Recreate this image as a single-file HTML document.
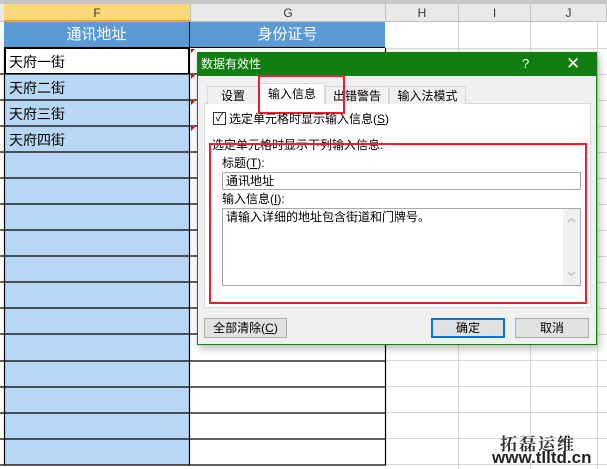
<!DOCTYPE html><html><head><meta charset="utf-8"><style>
*{margin:0;padding:0;box-sizing:border-box}
body{width:607px;height:469px;overflow:hidden;background:#fff;position:relative;font-family:"Liberation Sans","Noto Sans CJK SC",sans-serif;font-size:12px;color:#000}
.a{position:absolute}
</style></head><body>
<div class="a" style="left:0;top:0;width:607px;height:4px;background:#c6c6c6"></div>
<div class="a" style="left:0;top:4px;width:607px;height:18px;background:#e9e9e9;border-bottom:1px solid #c0c0c0"></div>
<div class="a" style="left:4px;top:4px;width:186px;height:18px;background:#f9d87a;border-bottom:2px solid #e3a93a;text-align:center;line-height:18px;color:#333">F</div>
<div class="a" style="left:190px;top:4px;width:195px;height:18px;border-left:1px solid #c0c0c0;text-align:center;line-height:18px;color:#333">G</div>
<div class="a" style="left:385px;top:4px;width:73px;height:18px;border-left:1px solid #c0c0c0;text-align:center;line-height:18px;color:#333">H</div>
<div class="a" style="left:458px;top:4px;width:72px;height:18px;border-left:1px solid #c0c0c0;text-align:center;line-height:18px;color:#333">I</div>
<div class="a" style="left:530px;top:4px;width:77px;height:18px;border-left:1px solid #c0c0c0;border-right:1px solid #c0c0c0;text-align:center;line-height:18px;color:#333">J</div>
<svg class="a" style="left:0;top:22px" width="607" height="447">
<g stroke="#d9d9d9"><line x1="458.5" y1="0" x2="458.5" y2="447"/><line x1="530.5" y1="0" x2="530.5" y2="447"/><line x1="597.5" y1="0" x2="597.5" y2="447"/>
<line x1="385" y1="26.5" x2="607" y2="26.5"/><line x1="385" y1="52.5" x2="607" y2="52.5"/><line x1="385" y1="78.5" x2="607" y2="78.5"/><line x1="385" y1="104.5" x2="607" y2="104.5"/><line x1="385" y1="130.5" x2="607" y2="130.5"/><line x1="385" y1="156.5" x2="607" y2="156.5"/><line x1="385" y1="182.5" x2="607" y2="182.5"/><line x1="385" y1="208.5" x2="607" y2="208.5"/><line x1="385" y1="234.5" x2="607" y2="234.5"/><line x1="385" y1="260.5" x2="607" y2="260.5"/><line x1="385" y1="286.5" x2="607" y2="286.5"/><line x1="385" y1="312.5" x2="607" y2="312.5"/><line x1="385" y1="338.5" x2="607" y2="338.5"/><line x1="385" y1="364.5" x2="607" y2="364.5"/><line x1="385" y1="390.5" x2="607" y2="390.5"/><line x1="385" y1="416.5" x2="607" y2="416.5"/><line x1="385" y1="442.5" x2="607" y2="442.5"/>
</g></svg>
<div class="a" style="left:4px;top:22px;width:186px;height:26px;background:#5b9bd5;color:#fff;font-size:15px;text-align:center;line-height:26px;border-right:1px solid #000;border-bottom:1px solid #000">通讯地址</div>
<div class="a" style="left:190px;top:22px;width:195px;height:26px;background:#5b9bd5;color:#fff;font-size:15px;text-align:center;line-height:26px;border-bottom:1px solid #000">身份证号</div>
<div class="a" style="left:4px;top:48px;width:186px;height:417px;background:#b7d7f5"></div>
<div class="a" style="left:5px;top:48px;width:184px;height:26px;background:#fff;border:1px solid #000"></div>
<svg class="a" style="left:0;top:48px" width="607" height="421">
<g stroke="#000" stroke-width="1.2">
<line x1="4.5" y1="0" x2="4.5" y2="417"/><line x1="189.5" y1="0" x2="189.5" y2="417"/><line x1="385.5" y1="0" x2="385.5" y2="417"/>
<line x1="0" y1="26" x2="386" y2="26"/><line x1="0" y1="52" x2="386" y2="52"/><line x1="0" y1="78" x2="386" y2="78"/><line x1="0" y1="104" x2="386" y2="104"/><line x1="0" y1="130" x2="386" y2="130"/><line x1="0" y1="156" x2="386" y2="156"/><line x1="0" y1="182" x2="386" y2="182"/><line x1="0" y1="208" x2="386" y2="208"/><line x1="0" y1="234" x2="386" y2="234"/><line x1="0" y1="260" x2="386" y2="260"/><line x1="0" y1="286" x2="386" y2="286"/><line x1="0" y1="313" x2="386" y2="313"/><line x1="0" y1="339" x2="386" y2="339"/><line x1="0" y1="365" x2="386" y2="365"/><line x1="0" y1="391" x2="386" y2="391"/><line x1="0" y1="417" x2="386" y2="417"/>
</g>
<g fill="#e00"><polygon points="191,1 195,1 191,5"/><polygon points="191,27 195,27 191,31"/><polygon points="191,53 195,53 191,57"/><polygon points="191,79 195,79 191,83"/></g>
</svg>
<div class="a" style="left:9px;top:52px;font-size:14px;line-height:20px">天府一街</div>
<div class="a" style="left:9px;top:78px;font-size:14px;line-height:20px">天府二街</div>
<div class="a" style="left:9px;top:104px;font-size:14px;line-height:20px">天府三街</div>
<div class="a" style="left:9px;top:130px;font-size:14px;line-height:20px">天府四街</div>
<div class="a" style="left:197px;top:52px;width:400px;height:293px;background:#f0f0f0;border:1px solid #128012;box-shadow:2px 3px 8px rgba(0,0,0,.3)"></div>
<div class="a" style="left:197px;top:52px;width:400px;height:24px;background:#127e12;color:#fff;line-height:24px;padding-left:4px">数据有效性</div>
<div class="a" style="left:522px;top:52px;color:#fff;line-height:24px;font-size:13px">?</div>
<div class="a" style="left:566px;top:52px;color:#fff;line-height:24px;font-size:17px">✕</div>
<div class="a" style="left:204px;top:103px;width:387px;height:205px;background:#fff;border:1px solid #d9d9d9"></div>
<div class="a" style="left:207px;top:86px;width:52px;height:18px;border:1px solid #d9d9d9;border-bottom:none;background:#f0f0f0;text-align:center;line-height:18px">设置</div>
<div class="a" style="left:259px;top:83px;width:66px;height:21px;border:1px solid #d9d9d9;border-bottom:none;background:#fff;text-align:center;line-height:20px">输入信息</div>
<div class="a" style="left:325px;top:86px;width:64px;height:18px;border:1px solid #d9d9d9;border-bottom:none;background:#f0f0f0;text-align:center;line-height:18px">出错警告</div>
<div class="a" style="left:389px;top:86px;width:77px;height:18px;border:1px solid #d9d9d9;border-bottom:none;background:#f0f0f0;text-align:center;line-height:18px">输入法模式</div>
<div class="a" style="left:258px;top:75px;width:87px;height:39px;border:2px solid #e8202a"></div>
<div class="a" style="left:213px;top:112px;width:13px;height:13px;border:1px solid #333;background:#fff;font-size:11px;line-height:11px;text-align:center">✓</div>
<div class="a" style="left:229px;top:111px;line-height:16px">选定单元格时显示输入信息(<u>S</u>)</div>
<div class="a" style="left:212px;top:138px;line-height:14px">选定单元格时显示下列输入信息:</div>
<div class="a" style="left:393px;top:145px;width:188px;height:1px;background:#ddd"></div>
<div class="a" style="left:209px;top:143px;width:378px;height:161px;border:2px solid #e8202a"></div>
<div class="a" style="left:222px;top:155px;line-height:16px">标题(<u>T</u>):</div>
<div class="a" style="left:222px;top:172px;width:359px;height:18px;border:1px solid #a8a8a8;background:#fff;padding-left:3px;line-height:16px">通讯地址</div>
<div class="a" style="left:222px;top:191px;line-height:16px">输入信息(<u>I</u>):</div>
<div class="a" style="left:222px;top:208px;width:359px;height:78px;border:1px solid #a8a8a8;background:#fff;padding-left:3px;line-height:16px">请输入详细的地址包含街道和门牌号。</div>
<svg class="a" style="left:563px;top:209px" width="17" height="76"><rect width="17" height="76" fill="#f0f0f0"/><path d="M5 13 L8.5 9.5 L12 13" stroke="#c0c0c0" stroke-width="1.5" fill="none"/><path d="M5 63 L8.5 66.5 L12 63" stroke="#c0c0c0" stroke-width="1.5" fill="none"/></svg>
<div class="a" style="left:204px;top:318px;width:83px;height:20px;border:1px solid #adadad;background:#e1e1e1;text-align:center;line-height:18px">全部清除(<u>C</u>)</div>
<div class="a" style="left:431px;top:318px;width:74px;height:20px;border:2px solid #0078d7;background:#e1e1e1;text-align:center;line-height:16px">确定</div>
<div class="a" style="left:515px;top:318px;width:74px;height:20px;border:1px solid #adadad;background:#e1e1e1;text-align:center;line-height:18px">取消</div>
<div class="a" style="left:500px;top:430px;font-size:17px;font-weight:bold;color:#333;letter-spacing:2px;font-family:'Noto Serif CJK SC',serif">拓磊运维</div>
<div class="a" style="left:492px;top:449px;font-size:17px;font-weight:bold;color:#222;line-height:18px">www.tlltd.cn</div>
</body></html>
